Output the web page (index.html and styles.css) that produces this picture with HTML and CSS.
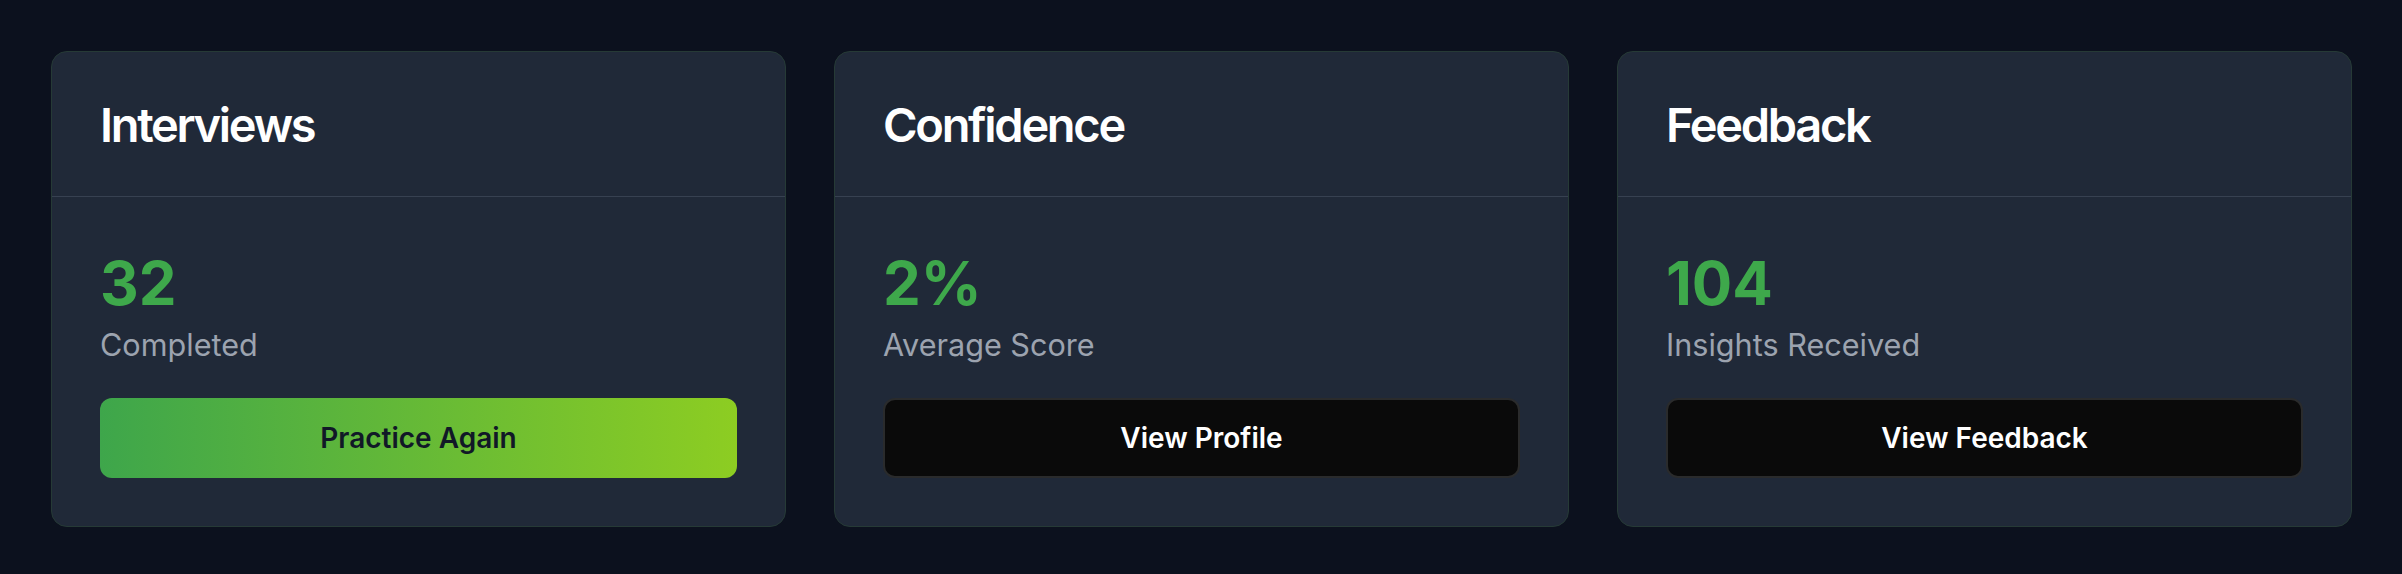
FILE: index.html
```html
<!DOCTYPE html>
<html lang="en">
<head>
<meta charset="utf-8">
<title>Stats</title>
<link rel="stylesheet" href="styles.css">
</head>
<body>
<main class="grid">
  <section class="card">
    <header class="card-head"><h2 class="card-title">Interviews</h2></header>
    <div class="card-body">
      <div class="stat">32</div>
      <div class="label">Completed</div>
      <button class="btn btn-primary">Practice Again</button>
    </div>
  </section>
  <section class="card">
    <header class="card-head"><h2 class="card-title">Confidence</h2></header>
    <div class="card-body">
      <div class="stat">2%</div>
      <div class="label">Average Score</div>
      <button class="btn btn-dark">View Profile</button>
    </div>
  </section>
  <section class="card">
    <header class="card-head"><h2 class="card-title">Feedback</h2></header>
    <div class="card-body">
      <div class="stat">104</div>
      <div class="label">Insights Received</div>
      <button class="btn btn-dark">View Feedback</button>
    </div>
  </section>
</main>
</body>
</html>
```
FILE: styles.css
```css
* { box-sizing: border-box; }
html, body { margin: 0; padding: 0; }
body {
  background: #0c111e;
  font-family: Inter, "Noto Sans", sans-serif;
  height: 574px;
}
.grid {
  display: grid;
  grid-template-columns: repeat(3, 1fr);
  gap: 48px;
  padding: 51px 50px 0 51px;
}
.card {
  background: #202938;
  border: 1px solid #263a36;
  border-radius: 16px;
  height: 476px;
  display: flex;
  flex-direction: column;
}
.card-head {
  height: 145px;
  border-bottom: 1px solid #374151;
  display: flex;
  align-items: center;
  padding: 0 48px;
}
.card-title {
  margin: 0;
  color: #ffffff;
  font-size: 47px;
  font-weight: 600;
  letter-spacing: -2.3px;
  line-height: 1;
}
.card-body {
  padding: 50px 48px 48px;
  display: flex;
  flex-direction: column;
}
.stat {
  color: #3ea84b;
  font-size: 60px;
  font-weight: 700;
  line-height: 72px;
}
.label {
  color: #9ca3af;
  font-size: 30.6px;
  line-height: 36px;
  margin-top: 8px;
}
.btn {
  margin-top: 35px;
  height: 80px;
  width: 100%;
  border-radius: 12px;
  font-family: Inter, "Noto Sans", sans-serif;
  font-size: 28px;
  font-weight: 600;
  cursor: pointer;
}
.btn-primary {
  border: none;
  background: linear-gradient(90deg, #3ea64b 0%, #8dcd22 100%);
  color: #111827;
}
.btn-dark {
  background: #0a0a0a;
  border: 2px solid #2a2b2c;
  color: #ffffff;
}
```
